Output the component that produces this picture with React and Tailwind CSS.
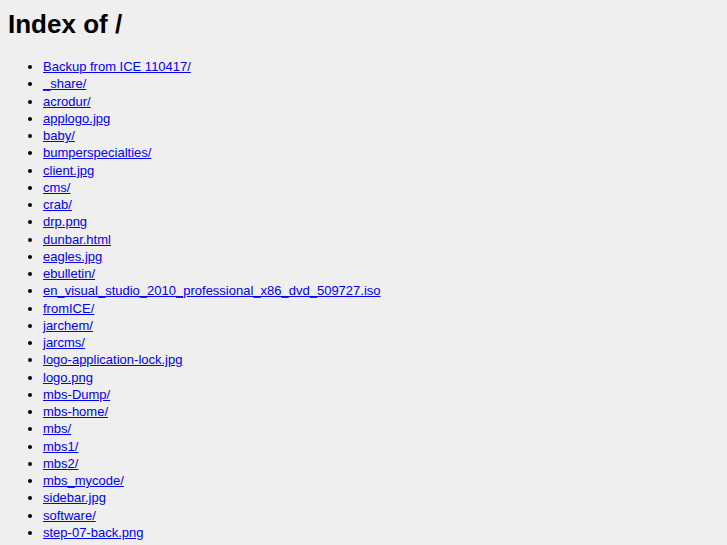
const entries = [
  'Backup from ICE 110417/',
  '_share/',
  'acrodur/',
  'applogo.jpg',
  'baby/',
  'bumperspecialties/',
  'client.jpg',
  'cms/',
  'crab/',
  'drp.png',
  'dunbar.html',
  'eagles.jpg',
  'ebulletin/',
  'en_visual_studio_2010_professional_x86_dvd_509727.iso',
  'fromICE/',
  'jarchem/',
  'jarcms/',
  'logo-application-lock.jpg',
  'logo.png',
  'mbs-Dump/',
  'mbs-home/',
  'mbs/',
  'mbs1/',
  'mbs2/',
  'mbs_mycode/',
  'sidebar.jpg',
  'software/',
  'step-07-back.png',
];

export default function App() {
  return (
    <div className="h-[545px] overflow-hidden bg-[#efefef] px-2 font-['Liberation_Sans',Arial,sans-serif] text-[13px] text-black">
      <h1 className="pt-[9px] text-[26px] font-bold leading-[30px]">Index of /</h1>
      <ul className="mt-[19px] list-disc pl-[35px]">
        {entries.map((name) => (
          <li key={name} className="leading-[17.25px]">
            <a href="#" className="text-[#0000ee] underline">
              {name}
            </a>
          </li>
        ))}
      </ul>
    </div>
  );
}
